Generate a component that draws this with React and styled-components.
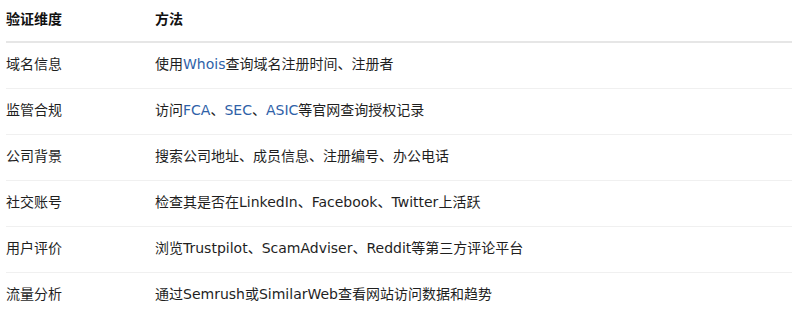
import React from "react";
import styled, { createGlobalStyle } from "styled-components";

const Global = createGlobalStyle`
  html, body { margin: 0; padding: 0; background: #ffffff; }
  body { font-family: "DejaVu Sans", "Noto Sans CJK SC", sans-serif; }
`;

const Table = styled.table`
  margin-left: 6px;
  width: 786px;
  border-collapse: collapse;
  font-size: 14px;
  color: #1f1f1f;
  text-align: left;
`;

const HeadCell = styled.th`
  padding: 9px 0 11px;
  line-height: 21px;
  font-weight: 700;
  color: #111111;
  border-bottom: 2px solid #e6e6e6;
  width: ${(p) => p.$w || "auto"};
`;

const Row = styled.tr`
  border-bottom: 1px solid #f0f0f0;
  &:last-child { border-bottom: none; }
`;

const Cell = styled.td`
  padding: 11px 0 13px;
  line-height: 21px;
  vertical-align: middle;
`;

const Link = styled.span`
  color: #2f62a8;
`;

const rows = [
  ["域名信息", <>使用<Link>Whois</Link>查询域名注册时间、注册者</>],
  ["监管合规", <>访问<Link>FCA</Link>、<Link>SEC</Link>、<Link>ASIC</Link>等官网查询授权记录</>],
  ["公司背景", <>搜索公司地址、成员信息、注册编号、办公电话</>],
  ["社交账号", <>检查其是否在LinkedIn、Facebook、Twitter上活跃</>],
  ["用户评价", <>浏览Trustpilot、ScamAdviser、Reddit等第三方评论平台</>],
  ["流量分析", <>通过Semrush或SimilarWeb查看网站访问数据和趋势</>],
];

export default function App() {
  return (
    <>
      <Global />
      <Table>
        <thead>
          <tr>
            <HeadCell $w="149px">验证维度</HeadCell>
            <HeadCell>方法</HeadCell>
          </tr>
        </thead>
        <tbody>
          {rows.map(([k, v]) => (
            <Row key={k}>
              <Cell>{k}</Cell>
              <Cell>{v}</Cell>
            </Row>
          ))}
        </tbody>
      </Table>
    </>
  );
}
